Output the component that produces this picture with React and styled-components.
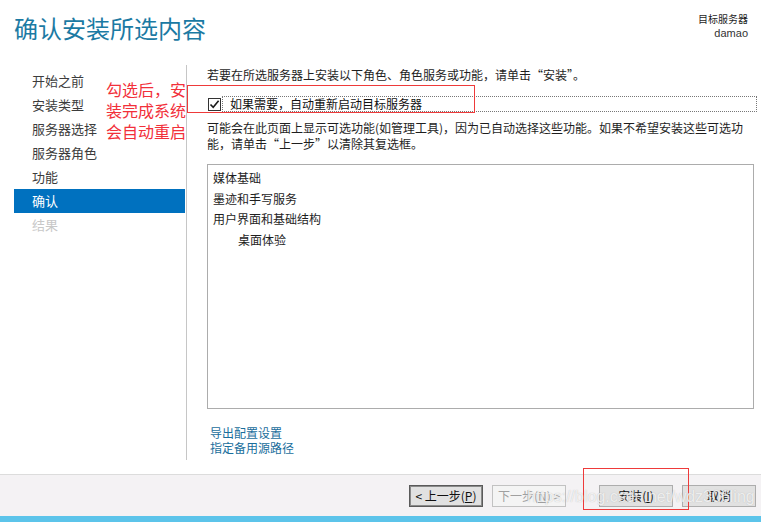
import React from 'react';
import styled, { createGlobalStyle } from 'styled-components';

const GlobalStyle = createGlobalStyle`
    html, body {
        margin: 0;
        padding: 0;
        background: #ffffff;
    }
    body {
        font-family: "Noto Sans CJK SC", "Liberation Sans", sans-serif;
        color: #1e1e1e;
    }
`;

const navItems = [
    { label: '开始之前' },
    { label: '安装类型' },
    { label: '服务器选择' },
    { label: '服务器角色' },
    { label: '功能' },
    { label: '确认', active: true },
    { label: '结果', disabled: true },
];

const features = [
    { label: '媒体基础' },
    { label: '墨迹和手写服务' },
    { label: '用户界面和基础结构' },
    { label: '桌面体验', indent: true },
];

export default function App () {
    return (
        <Page>
            <GlobalStyle />
            <Header>
                <Title>确认安装所选内容</Title>
                <Target>
                    <TargetLabel>目标服务器</TargetLabel>
                    <TargetName>damao</TargetName>
                </Target>
            </Header>
            <Main>
                <Nav>
                    {navItems.map((item) => (
                        <NavItem key={item.label} $active={item.active} $disabled={item.disabled}>
                            {item.label}
                        </NavItem>
                    ))}
                </Nav>
                <Divider />
                <Content>
                    <Intro>若要在所选服务器上安装以下角色、角色服务或功能，请单击“安装”。</Intro>
                    <CheckRow>
                        <CheckBox>
                            <svg width="11" height="11" viewBox="0 0 11 11">
                                <path d="M1.5 5.5 L4.2 8.3 L9.6 1.8" fill="none" stroke="#1a1a1a" strokeWidth="1.6" />
                            </svg>
                        </CheckBox>
                        <CheckLabel>如果需要，自动重新启动目标服务器</CheckLabel>
                    </CheckRow>
                    <Paragraph>
                        可能会在此页面上显示可选功能(如管理工具)，因为已自动选择这些功能。如果不希望安装这些可选功<br />
                        能，请单击“上一步”以清除其复选框。
                    </Paragraph>
                    <ListBox>
                        {features.map((f) => (
                            <ListItem key={f.label} $indent={f.indent}>{f.label}</ListItem>
                        ))}
                    </ListBox>
                    <Links>
                        <Link>导出配置设置</Link>
                        <Link>指定备用源路径</Link>
                    </Links>
                </Content>
            </Main>
            <Footer>
                <Button $focused>&lt;&nbsp;上一步(<u>P</u>)</Button>
                <Button disabled>下一步(<u>N</u>)&nbsp;&gt;</Button>
                <ButtonGap />
                <Button>安装(<u>I</u>)</Button>
                <Button>取消</Button>
            </Footer>
            <BlueBar />

            <Note>勾选后，安<br />装完成系统<br />会自动重启</Note>
            <MarkBox $left={187} $top={85} $width={288} $height={28} />
            <MarkBox $left={583} $top={468} $width={106} $height={42} />
            <Watermark>https://blog.csdn.net/wdz306ling</Watermark>
        </Page>
    );
}

const Page = styled.div`
    position: relative;
    width: 761px;
    height: 522px;
    display: flex;
    flex-direction: column;
    overflow: hidden;
`;

const Header = styled.div`
    height: 62px;
    display: flex;
    justify-content: space-between;
    align-items: flex-start;
    padding: 0 13px 0 14px;
    box-sizing: border-box;
`;

const Title = styled.h1`
    margin: 13px 0 0 0;
    font-size: 24px;
    font-weight: 400;
    line-height: 30px;
    color: #1b7aa3;
    letter-spacing: 0;
`;

const Target = styled.div`
    margin-top: 12px;
    display: flex;
    flex-direction: column;
    align-items: flex-end;
`;

const TargetLabel = styled.span`
    font-size: 10px;
    line-height: 14px;
    color: #1e1e1e;
`;

const TargetName = styled.span`
    font-family: "Liberation Sans", "Noto Sans CJK SC", sans-serif;
    font-size: 11px;
    line-height: 14px;
    color: #333;
`;

const Main = styled.div`
    flex: 1;
    display: flex;
    min-height: 0;
`;

const Nav = styled.div`
    width: 171px;
    margin-left: 14px;
    padding-top: 7px;
    display: flex;
    flex-direction: column;
`;

const NavItem = styled.div`
    height: 24px;
    line-height: 24px;
    padding-left: 18px;
    font-size: 13px;
    color: ${(p) => (p.$active ? '#ffffff' : p.$disabled ? '#c8c8c8' : '#3c3c3c')};
    background: ${(p) => (p.$active ? '#0071bf' : 'transparent')};
`;

const Divider = styled.div`
    width: 1px;
    margin: 3px 0 14px 1px;
    background: #c6c6c6;
`;

const Content = styled.div`
    flex: 1;
    padding: 5px 7px 0 20px;
    display: flex;
    flex-direction: column;
    font-size: 12px;
    min-width: 0;
`;

const Intro = styled.div`
    line-height: 16px;
    color: #1e1e1e;
`;

const CheckRow = styled.div`
    margin-top: 13px;
    height: 16px;
    display: flex;
    align-items: center;
    margin-right: -3px;
`;

const CheckBox = styled.span`
    width: 11px;
    height: 11px;
    border: 1px solid #333;
    margin-left: 1px;
    display: flex;
    align-items: center;
    justify-content: center;
    background: #fff;
`;

const CheckLabel = styled.span`
    flex: 1;
    margin-left: 1px;
    height: 14px;
    line-height: 14px;
    padding-left: 7px;
    border: 1px dotted #777;
    color: #111;
`;

const Paragraph = styled.div`
    margin-top: 8px;
    line-height: 16px;
    color: #1e1e1e;
`;

const ListBox = styled.div`
    margin-top: 12px;
    height: 245px;
    box-sizing: border-box;
    border: 1px solid #acacac;
    padding: 3px 5px;
`;

const ListItem = styled.div`
    height: 20.5px;
    line-height: 20.5px;
    padding-left: ${(p) => (p.$indent ? '25px' : '0')};
    color: #1e1e1e;
`;

const Links = styled.div`
    margin-top: 16px;
    padding-left: 3px;
    display: flex;
    flex-direction: column;
`;

const Link = styled.span`
    line-height: 15px;
    color: #1a6e9c;
    cursor: pointer;
`;

const Footer = styled.div`
    height: 42px;
    box-sizing: border-box;
    border-top: 1px solid #dcdcdc;
    background: #f4f2f4;
    display: flex;
    justify-content: flex-end;
    align-items: flex-start;
    padding: 10px 5px 0 0;
    gap: 9px;
`;

const ButtonGap = styled.span`
    width: 15px;
`;

const Button = styled.button`
    width: 74px;
    height: 22px;
    padding: 0;
    box-sizing: border-box;
    font-family: "Noto Sans CJK SC", "Liberation Sans", sans-serif;
    font-size: 12px;
    line-height: 20px;
    color: ${(p) => (p.disabled ? '#a0a0a0' : '#111')};
    background: ${(p) => (p.disabled ? '#f4f4f4' : '#e1e1e1')};
    border: 1px solid ${(p) => (p.disabled ? '#c2c2c2' : p.$focused ? '#5a5a5a' : '#adadad')};
    outline: ${(p) => (p.$focused ? '1px solid #8a8a8a' : 'none')};
    outline-offset: -2px;

    u {
        text-decoration: underline;
    }
`;

const BlueBar = styled.div`
    height: 6px;
    background: #5cc4ea;
`;

const Note = styled.div`
    position: absolute;
    left: 106px;
    top: 79px;
    font-size: 16px;
    line-height: 21px;
    color: #f2303a;
`;

const MarkBox = styled.div`
    position: absolute;
    left: ${(p) => p.$left}px;
    top: ${(p) => p.$top}px;
    width: ${(p) => p.$width}px;
    height: ${(p) => p.$height}px;
    box-sizing: border-box;
    border: 1px solid #ee3a3a;
    pointer-events: none;
`;

const Watermark = styled.div`
    position: absolute;
    left: 527px;
    top: 488px;
    font-family: "Liberation Sans", sans-serif;
    font-size: 16px;
    color: rgba(255, 255, 255, 0.75);
    text-shadow: 0 0 1px rgba(150, 150, 150, 0.6);
    pointer-events: none;
    white-space: nowrap;
`;
